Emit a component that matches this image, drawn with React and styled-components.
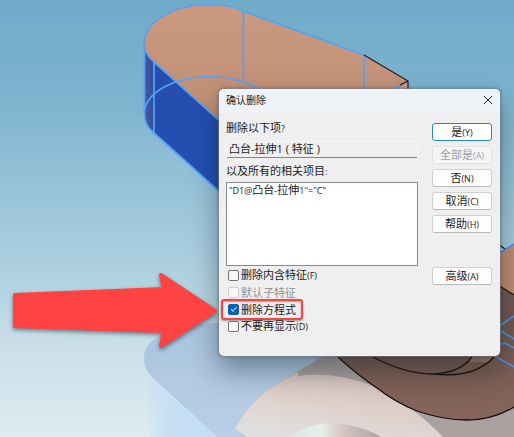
import React from "react";
import styled, { createGlobalStyle, css } from "styled-components";

const GlobalStyle = createGlobalStyle`
  *, *::before, *::after { box-sizing: border-box; }
  body {
    margin: 0;
    color: #1b1b1b;
    font-family: "Open Sans", "Noto Sans CJK SC", sans-serif;
    font-size: 11px;
    line-height: 16px;
  }
  button, input { font: inherit; color: inherit; }
`;

const Workspace = styled.main`
  position: relative;
  min-height: 100vh;
  padding: 88px 13px 80px 218px;
  overflow: hidden;
  background: linear-gradient(#6eabc9 0%, #7db3ce 22%, #9bc5d9 46%, #b0d2e1 64%, #cbe0e9 80%, #deecf2 100%);
`;

const ModelView = styled.svg`
  position: absolute;
  inset: 0;
  width: 100%;
  height: 100%;
`;

const Pointer = styled.svg`
  position: absolute;
  left: 8px;
  top: 268px;
  width: 216px;
  height: 90px;
  filter: drop-shadow(0 2px 2px rgba(40, 60, 70, 0.6));
`;

const Dialog = styled.section`
  position: relative;
  min-height: 269px;
  border: 1px solid rgba(130, 145, 155, 0.45);
  border-radius: 6px;
  background: #efefef;
  background-clip: padding-box;
  box-shadow: 0 14px 28px rgba(20, 30, 40, 0.42), 0 0 3px rgba(20, 30, 40, 0.3);
`;

const TitleBar = styled.header`
  display: flex;
  align-items: center;
  justify-content: space-between;
  height: 24px;
  padding: 0 3px 3px 7px;
  border-radius: 5px 5px 0 0;
  background: #eff3f7;
`;

const Title = styled.h1`
  margin: 0;
  font-size: 10px;
  font-weight: 400;
`;

const CloseButton = styled.button`
  display: grid;
  place-items: center;
  width: 18px;
  height: 18px;
  padding: 0;
  border: 0;
  background: none;
`;

const Body = styled.div`
  display: flex;
  gap: 14px;
  padding: 7px 8px 0 7px;
`;

const Details = styled.div`
  flex: 1;
  min-width: 0;
`;

const Caption = styled.label`
  display: block;
  height: 16px;
  white-space: nowrap;
`;

const ItemField = styled.input`
  display: block;
  width: 100%;
  height: 17px;
  margin: 5px 0;
  padding: 0 2px 3px;
  border: 1px solid #f6f6f6;
  border-bottom-color: #858585;
  border-radius: 2px;
  background: #efefef;
  outline: none;
`;

const RelatedList = styled.ul`
  height: 84px;
  margin: 3px 0 1px;
  padding: 0 2px;
  border: 1px solid #858991;
  background: #fff;
  list-style: none;
  overflow: auto;
`;

const RelatedItem = styled.li`
  height: 15px;
  line-height: 14px;
  white-space: nowrap;
`;

const Small = styled.span`
  font-size: 9px;
`;

const Option = styled.label`
  position: relative;
  display: flex;
  align-items: center;
  gap: 2px;
  width: max-content;
  height: 17px;
  padding-left: 2px;
  color: ${(p) => (p.$muted ? "#929292" : "#1b1b1b")};

  ${(p) =>
    p.$marked &&
    css`
      &::after {
        content: "";
        position: absolute;
        inset: -2px -7px -2px -5px;
        border: 2px solid #f94444;
        border-radius: 3px;
        box-shadow: 0 1px 2px rgba(40, 40, 40, 0.45), inset 0 1px 2px rgba(40, 40, 40, 0.35);
        pointer-events: none;
      }
    `}
`;

const Tick = styled.input`
  appearance: none;
  display: grid;
  place-items: center;
  width: 11px;
  height: 11px;
  margin: 0;
  border: 1px solid #747474;
  border-radius: 2px;
  background: #f7f7f7;

  &:disabled { border-color: #cecece; }

  &:checked {
    border-color: #0760b4;
    background: #0760b4;
  }

  &:checked::before {
    content: "";
    width: 6px;
    height: 3px;
    margin-bottom: 2px;
    border: solid #b9e0ff;
    border-width: 0 0 1px 1px;
    transform: rotate(-45deg);
  }
`;

const Actions = styled.div`
  display: flex;
  flex: 0 0 60px;
  flex-direction: column;
  gap: 5px;
  padding-top: 3px;
`;

const ActionButton = styled.button`
  height: 18px;
  padding: 0;
  border: 1px solid ${(p) => (p.$primary ? "#2683ce" : "#d0d0d0")};
  border-bottom-color: ${(p) => (p.$primary ? "#2683ce" : "#b9b9b9")};
  border-radius: 3px;
  background: #fdfdfd;
  line-height: 14px;
  white-space: nowrap;

  &:disabled {
    border-color: #e3e3e3;
    background: #f5f5f5;
    color: #a0a0a0;
  }
`;

const Spacer = styled.div`
  height: 24px;
`;

const actions = [
  { text: "是", accessKey: "Y", primary: true },
  { text: "全部是", accessKey: "A", disabled: true },
  { text: "否", accessKey: "N" },
  { text: "取消", accessKey: "C" },
  { text: "帮助", accessKey: "H" },
];

const options = [
  { id: "absorbed", text: "删除内含特征", accessKey: "F" },
  { id: "children", text: "默认子特征", disabled: true },
  { id: "equations", text: "删除方程式", checked: true, marked: true },
  { id: "hide", text: "不要再显示", accessKey: "D" },
];

function Action({ text, accessKey, primary, disabled }) {
  return (
    <ActionButton type="button" $primary={primary} disabled={disabled}>
      {text}
      <Small>({accessKey})</Small>
    </ActionButton>
  );
}

function Model() {
  return (
    <ModelView viewBox="0 0 514 437" preserveAspectRatio="xMidYMid slice" aria-hidden="true">
      <defs>
        <linearGradient id="top" x1="0" y1="0" x2="0" y2="1">
          <stop offset="0" stopColor="#cb997f" />
          <stop offset="1" stopColor="#bd8b73" />
        </linearGradient>
        <linearGradient id="round" x1="0" x2="1">
          <stop offset="0" stopColor="#4a5797" />
          <stop offset="1" stopColor="#304fa4" />
        </linearGradient>
        <linearGradient id="brown" x1="0" y1="0" x2="0" y2="1">
          <stop offset="0.3" stopColor="#71574e" />
          <stop offset="1" stopColor="#86665a" />
        </linearGradient>
        <linearGradient id="sideMirror" x1="0" x2="1">
          <stop offset="0" stopColor="#c3def5" stopOpacity="0.15" />
          <stop offset="0.35" stopColor="#bfdbf5" stopOpacity="0.8" />
          <stop offset="1" stopColor="#c4def8" />
        </linearGradient>
        <linearGradient id="faceMirror" x1="0" y1="0" x2="0" y2="1">
          <stop offset="0" stopColor="#a9c4de" />
          <stop offset="1" stopColor="#bacfe5" />
        </linearGradient>
        <linearGradient id="pinkMirror" x1="0" y1="1" x2="0.6" y2="0">
          <stop offset="0" stopColor="#e0e2e4" />
          <stop offset="0.5" stopColor="#dfd3cf" />
          <stop offset="1" stopColor="#d6c2b9" />
        </linearGradient>
        <linearGradient id="holeMirror" x1="0" x2="1">
          <stop offset="0" stopColor="#d9e9e4" />
          <stop offset="0.35" stopColor="#e4f0ec" />
          <stop offset="0.55" stopColor="#d8c9c5" />
          <stop offset="1" stopColor="#aaa3a1" />
        </linearGradient>
      </defs>

      <path d="M145 362 C147 372 151 378 157 384 L222 441 H150 Z" fill="url(#sideMirror)" />
      <path d="M144 358 C144 340 166 326 209 323 H360 V437 H217 L156 381 C148 374 144 366 144 358 Z" fill="url(#faceMirror)" />
      <path d="M322 357 L272 387 C256 398 242 414 235 429 L247 437 H514 V350 H334 Z" fill="#aaa2a0" />
      <path d="M298 372 L272 387 C256 398 242 414 235 429 L247 437 H443 C420 413 400 400 378 389 C350 375 320 373 298 376 Z" fill="url(#pinkMirror)" />
      <path d="M290 437 C306 424 327 422 342 424 C358 426 371 431 381 437 Z" fill="url(#holeMirror)" />

      <path d="M338 357 C352 370 365 380 377 388 C391 399 402 405 417 411 C434 417 450 420 467 420 C487 420 501 415 514 407 V280 H460 V340 Z" fill="url(#brown)" />
      <path d="M453 370 C461 368 467 363 472 357 H494 C489 362 485 365 480 367 C471 373 461 374 448 374 Z" fill="#806051" />
      <path d="M468 362 L472 357 H494 L488 362 Z" fill="#a47b64" />
      <path d="M495 255 L514 244 V295 L495 284 Z" fill="#c18d73" />
      <g fill="none" stroke="#17110f" strokeWidth="1.3">
        <path d="M338 357 C352 370 365 380 377 388 C391 399 402 405 417 411 C434 417 450 420 467 420 C487 420 501 415 514 407" />
        <path d="M373 357 C394 368 413 374 433 374 C450 373 463 369 472 357" />
        <path d="M435 374 C462 377 481 371 494 357" />
        <path d="M498 285 L514 295 M498 244 L505 249" />
      </g>
      <path d="M495 256 L514 244 M498 327 L514 316 M498 329 L514 339 M498 345 L505 343 L514 348 M495 356 L514 367" fill="none" stroke="#4995e8" strokeWidth="1.6" />

      <path d="M144 43 C146 20 175 4.500 208 4.500 C224 4.500 235 7 243 11 L364 55 L408 80 V94 H250 V148 L154 62 C147 56 144 50 144 43 Z" fill="url(#top)" />
      <path d="M144 44 C145 52 148 57 154 62 L250 148 V219 L154 133 C147 127 144 122 144 113 Z" fill="#244fb1" />
      <path d="M144 44 C145 52 148 57 154 62 V133 C147 127 144 122 144 113 Z" fill="url(#round)" />
      <path d="M408 81 V94 H390 Z" fill="#cf9b91" />
      <g fill="none" stroke="#53a3f5" strokeWidth="1.7">
        <path d="M364 55 L243 11 C235 7 224 4.500 208 4.500 C175 4.500 146 20 144 43 C144 50 147 56 154 62 L250 148" />
        <path d="M144.500 43 V113 C144.500 122 147 127 154 133 L250 219" />
        <path d="M154 62 V133 M243.500 11 V82 M364 55 V94 M401 85 L390 92" />
        <path d="M144 113 C146 91 176 77 208 76.500 C230 76.500 244 81 265 91" />
      </g>
      <path d="M364 55 L408 81 V94 M408 81 L400 85" fill="none" stroke="#201c1b" strokeWidth="1.2" />
    </ModelView>
  );
}

export default function App() {
  return (
    <Workspace>
      <GlobalStyle />
      <Model />
      <Dialog role="dialog" aria-labelledby="dialog-title">
        <TitleBar>
          <Title id="dialog-title">确认删除</Title>
          <CloseButton type="button" aria-label="关闭">
            <svg width="10" height="10" viewBox="0 0 10 10" aria-hidden="true">
              <path d="M1 1 L9 9 M9 1 L1 9" fill="none" stroke="#222" strokeWidth="1" />
            </svg>
          </CloseButton>
        </TitleBar>
        <Body>
          <Details>
            <Caption htmlFor="item">
              删除以下项<Small>?</Small>
            </Caption>
            <ItemField id="item" readOnly value="凸台-拉伸1 ( 特征 )" />
            <Caption as="div" id="related-label">
              以及所有的相关项目<Small>:</Small>
            </Caption>
            <RelatedList role="listbox" aria-labelledby="related-label">
              <RelatedItem role="option">
                <Small>"D1@</Small>凸台<Small>-</Small>拉伸<Small>1"="C"</Small>
              </RelatedItem>
            </RelatedList>
            {options.map((o) => (
              <Option key={o.id} htmlFor={o.id} $muted={o.disabled} $marked={o.marked}>
                <Tick id={o.id} type="checkbox" defaultChecked={o.checked} disabled={o.disabled} />
                <span>
                  {o.text}
                  {o.accessKey && <Small>({o.accessKey})</Small>}
                </span>
              </Option>
            ))}
          </Details>
          <Actions>
            {actions.map((a) => (
              <Action key={a.text} {...a} />
            ))}
            <Spacer />
            <Action text="高级" accessKey="A" />
          </Actions>
        </Body>
      </Dialog>
      <Pointer viewBox="8 268 216 90" aria-hidden="true">
        <path
          d="M15 295 L164 289 L161 275 L215 311 L161 346 L164 331 L15 326 Z"
          fill="#ff4343"
          stroke="#ff4343"
          strokeWidth="4"
          strokeLinejoin="round"
        />
      </Pointer>
    </Workspace>
  );
}
